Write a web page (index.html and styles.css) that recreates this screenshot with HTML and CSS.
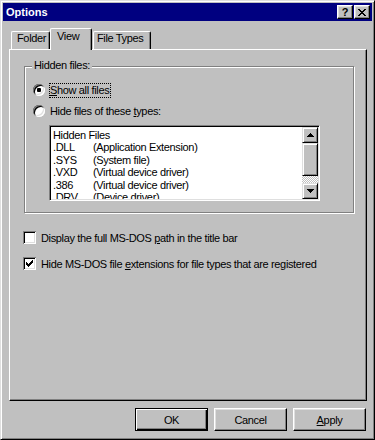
FILE: index.html
```html
<!DOCTYPE html>
<html lang="en">
<head>
  <meta charset="UTF-8">
  <title>Options</title>
  <link rel="stylesheet" href="styles.css">
</head>
<body>

<div class="window">
  <div class="titlebar">
    <span class="title">Options</span>
    <span class="tbtn help">?</span>
    <span class="tbtn close">
      <svg width="8" height="7" viewBox="0 0 8 7" shape-rendering="crispEdges"><path d="M0 0h2v1H0zM6 0h2v1H6zM1 1h2v1H1zM5 1h2v1H5zM2 2h4v1H2zM3 3h2v1H3zM2 4h4v1H2zM1 5h2v1H1zM5 5h2v1H5zM0 6h2v1H0zM6 6h2v1H6z" fill="#000"/></svg>
    </span>
  </div>

  <div class="content">
    <div class="tabs">
      <div class="tab folder">Folder</div>
      <div class="tab active">View</div>
      <div class="tab types">File Types</div>
    </div>

    <div class="panel">
      <div class="group">
        <span class="group-label">Hidden files:</span>
        <div class="radio-row">
          <span class="radio on"></span>
          <span class="radio-text focus"><u>S</u>how all files</span>
        </div>
        <div class="radio-row second">
          <span class="radio"></span>
          <span class="radio-text">Hide files of these <u>t</u>ypes:</span>
        </div>
        <div class="listbox">
          <div class="items">
            <div class="item">Hidden Files</div>
            <div class="item"><span class="ext">.DLL</span>(Application Extension)</div>
            <div class="item"><span class="ext">.SYS</span>(System file)</div>
            <div class="item"><span class="ext">.VXD</span>(Virtual device driver)</div>
            <div class="item"><span class="ext">.386</span>(Virtual device driver)</div>
            <div class="item"><span class="ext">.DRV</span>(Device driver)</div>
          </div>
          <div class="scrollbar">
            <div class="sbtn">
              <svg width="7" height="4" viewBox="0 0 7 4" shape-rendering="crispEdges"><path d="M3 0h1v1H3zM2 1h3v1H2zM1 2h5v1H1zM0 3h7v1H0z" fill="#000"/></svg>
            </div>
            <div class="thumb"></div>
            <div class="track"></div>
            <div class="sbtn">
              <svg width="7" height="4" viewBox="0 0 7 4" shape-rendering="crispEdges"><path d="M0 0h7v1H0zM1 1h5v1H1zM2 2h3v1H2zM3 3h1v1H3z" fill="#000"/></svg>
            </div>
          </div>
        </div>
      </div>

      <div class="check-row first">
        <span class="check"></span>
        <span>Display the full MS-DOS <u>p</u>ath in the title bar</span>
      </div>
      <div class="check-row">
        <span class="check">
          <svg width="7" height="7" viewBox="0 0 7 7" shape-rendering="crispEdges"><path d="M0 2h1v3H0zM1 3h1v3H1zM2 4h1v3H2zM3 3h1v3H3zM4 2h1v3H4zM5 1h1v3H5zM6 0h1v3H6z" fill="#000"/></svg>
        </span>
        <span>Hide MS-DOS file <u>e</u>xtensions for file types that are registered</span>
      </div>
    </div>

    <div class="buttons">
      <button class="btn default">OK</button>
      <button class="btn">Cancel</button>
      <button class="btn"><u>A</u>pply</button>
    </div>
  </div>
</div>

</body>
</html>
```

FILE: styles.css
```css
body {
  margin: 0;
  background: #c0c0c0;
  font-family: "Liberation Sans", Arial, sans-serif;
  font-size: 11px;
  letter-spacing: -0.35px;
  color: #000;
}
u {
  text-decoration: underline;
  text-underline-offset: 1px;
}
.window {
  width: 375px;
  height: 440px;
  box-sizing: border-box;
  border: 1px solid;
  border-color: #dfdfdf #000 #000 #dfdfdf;
  box-shadow: inset 1px 1px #fff, inset -1px -1px #808080;
  padding: 2px;
  background: #c0c0c0;
  display: flex;
  flex-direction: column;
}
.titlebar {
  height: 18px;
  flex-shrink: 0;
  background: #000080;
  color: #fff;
  display: flex;
  align-items: center;
  padding: 0 2px 0 3px;
}
.title {
  flex: 1;
  font-weight: bold;
  letter-spacing: 0;
}
.tbtn {
  width: 16px;
  height: 14px;
  box-sizing: border-box;
  border: 1px solid;
  border-color: #fff #000 #000 #fff;
  box-shadow: inset -1px -1px #808080, inset 1px 1px #dfdfdf;
  background: #c0c0c0;
  color: #000;
  display: flex;
  align-items: center;
  justify-content: center;
  font-weight: bold;
  letter-spacing: 0;
  line-height: 12px;
}
.close {
  margin-left: 1px;
}
.content {
  padding: 0 5px 0 6px;
}
.tabs {
  display: flex;
  align-items: flex-end;
  height: 21px;
  margin-top: 7px;
  padding-left: 2px;
}
.tab {
  height: 18px;
  box-sizing: border-box;
  border-top: 1px solid #fff;
  border-left: 1px solid #fff;
  border-right: 1px solid #000;
  border-radius: 2px 2px 0 0;
  box-shadow: inset -1px 0 #808080;
  padding: 0 0 0 5px;
  line-height: 13px;
}
.tab.folder {
  width: 39px;
}
.tab.active {
  width: 42px;
  height: 22px;
  margin-bottom: -1px;
  padding-top: 1px;
  padding-left: 6px;
  position: relative;
  z-index: 1;
  background: #c0c0c0;
}
.tab.types {
  width: 58px;
  margin-left: 1px;
  padding-left: 3px;
}
.panel {
  height: 352px;
  box-sizing: border-box;
  border: 1px solid;
  border-color: #fff #000 #000 #fff;
  box-shadow: inset -1px -1px #808080;
  padding-left: 13px;
}
.group {
  position: relative;
  width: 330px;
  box-sizing: border-box;
  margin: 16px 0 0 1px;
  border: 1px solid #808080;
  box-shadow: 1px 1px #fff, inset 1px 1px #fff;
  padding: 15px 0 11px 8px;
}
.group-label {
  position: absolute;
  top: -8px;
  left: 7px;
  padding: 0 2px;
  background: #c0c0c0;
  line-height: 13px;
}
.radio-row {
  display: flex;
  align-items: center;
  height: 16px;
}
.radio-row.second {
  margin-top: 5px;
}
.radio {
  position: relative;
  width: 12px;
  height: 12px;
  border-radius: 50%;
  background: #fff;
  box-shadow: inset 1px 1px #808080, inset -1px -1px #fff, inset 2px 2px #000, inset -2px -2px #dfdfdf;
}
.radio.on::after {
  content: "";
  position: absolute;
  left: 4px;
  top: 4px;
  width: 4px;
  height: 4px;
  border-radius: 1px;
  background: #000;
}
.radio-text {
  margin-left: 4px;
  border: 1px solid transparent;
  padding: 0 1px 0 0;
  line-height: 13px;
}
.radio-text.focus {
  border: 1px dotted #000;
}
.listbox {
  display: flex;
  width: 271px;
  height: 76px;
  box-sizing: border-box;
  margin: 6px 0 0 16px;
  border: 1px solid;
  border-color: #808080 #fff #fff #808080;
  box-shadow: inset 1px 1px #000, inset -1px -1px #dfdfdf;
  padding: 1px;
  background: #fff;
}
.items {
  flex: 1;
  overflow: hidden;
  padding: 2px 0 0 2px;
}
.item {
  line-height: 12.4px;
  white-space: nowrap;
}
.ext {
  display: inline-block;
  width: 40px;
}
.scrollbar {
  width: 16px;
  display: flex;
  flex-direction: column;
}
.sbtn,
.thumb {
  box-sizing: border-box;
  border: 1px solid;
  border-color: #dfdfdf #000 #000 #dfdfdf;
  box-shadow: inset 1px 1px #fff, inset -1px -1px #808080;
  background: #c0c0c0;
}
.sbtn {
  height: 16px;
  display: flex;
  align-items: center;
  justify-content: center;
}
.thumb {
  height: 33px;
}
.track {
  flex: 1;
  background: repeating-conic-gradient(#c0c0c0 0 25%, #fff 0 50%) 0 0 / 2px 2px;
}
.check-row {
  display: flex;
  align-items: center;
  height: 13px;
  margin-top: 13px;
}
.check-row.first {
  margin-top: 18px;
}
.check {
  width: 13px;
  height: 13px;
  box-sizing: border-box;
  margin-right: 5px;
  background: #fff;
  box-shadow: inset 1px 1px #808080, inset -1px -1px #fff, inset 2px 2px #000, inset -2px -2px #dfdfdf;
  display: flex;
  align-items: center;
  justify-content: center;
}
.buttons {
  display: flex;
  justify-content: flex-end;
  gap: 6px;
  margin-top: 7px;
  padding-right: 1px;
}
.btn {
  width: 73px;
  height: 23px;
  box-sizing: border-box;
  border: 1px solid;
  border-color: #fff #000 #000 #fff;
  box-shadow: inset -1px -1px #808080, inset 1px 1px #dfdfdf;
  background: #c0c0c0;
  font-family: inherit;
  font-size: 11px;
  letter-spacing: -0.35px;
  color: #000;
  padding: 0;
}
.btn.default {
  border-color: #000;
  box-shadow: inset 1px 1px #fff, inset -1px -1px #000, inset -2px -2px #808080;
}
```
